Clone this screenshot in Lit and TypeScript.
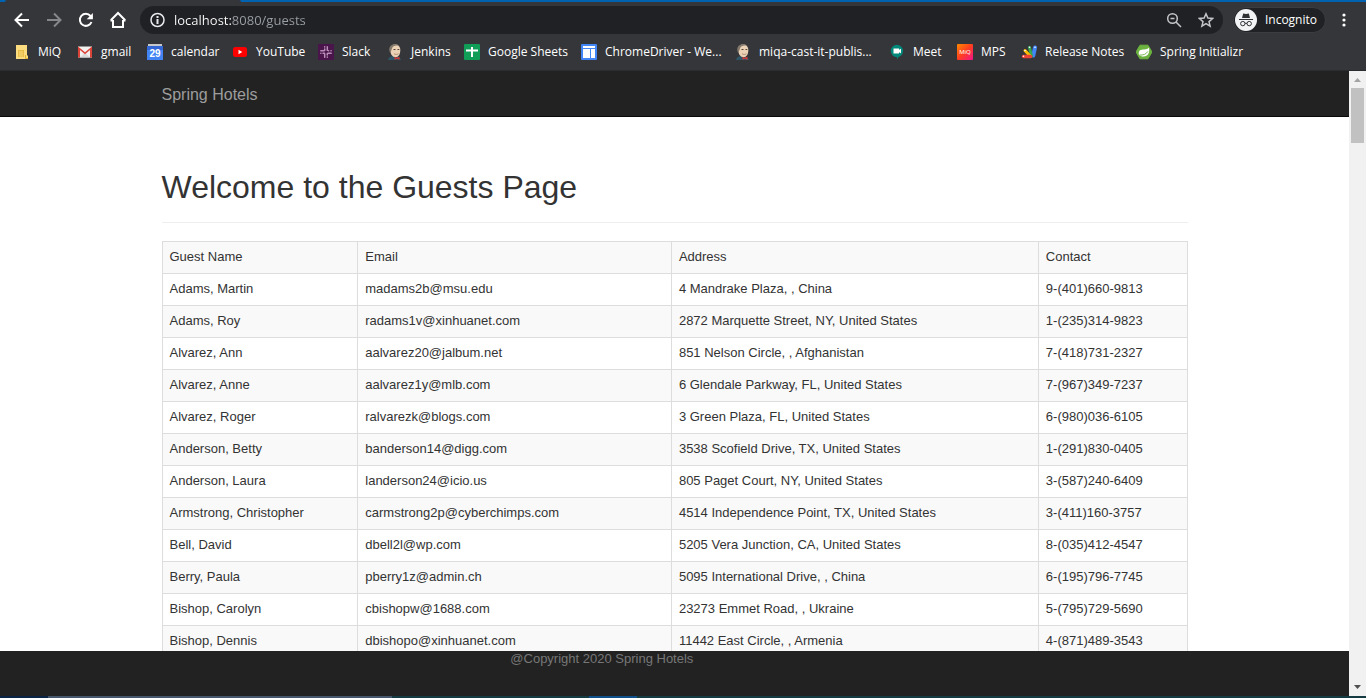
import { LitElement, html, css, svg } from "lit";
import { customElement } from "lit/decorators.js";

const jenkins = svg`
  <path d="M1 16c.3-2.500 2.500-4 6-4s6.500 1.500 7 4z" fill="#2f5566"/>
  <path d="M3 5.500C3 2.500 5 .5 8 .5s5.300 2 5.300 5.500c0 4.500-1.800 7.200-4.800 7.200S3.500 10.500 3 5.500z" fill="#ecd2b5"/>
  <path d="M3.300 9C1 5 2.500.6 8 .3 10 .2 11.500.8 12.300 2 9 1 6 1.500 5 4.500z" fill="#82776b"/>
  <path d="M6.500 5.500h2M10.500 5.500h1.800" stroke="#51413a" stroke-width="1" fill="none"/>
  <path d="M7 9.800c1.500.8 3 .8 4.500 0" stroke="#9c7f68" stroke-width=".8" fill="none"/>
  <path d="M7.500 12.800l2.200 1 2.800-1v3l-2.800-1-2.200 1z" fill="#d33833"/>`;

interface Bookmark {
  label: string;
  icon: unknown;
}

const bookmarks: Bookmark[] = [
  {
    label: "MiQ",
    icon: svg`<path d="M2 1h11v10.500h1V15H2z" fill="#fbdc7e"/><path d="M4 6h6v7H4z" fill="#e6b63c"/><path d="M4.500 8h5M4.500 10h5M4.500 12h5M6 6.500v6M8 6.500v6" stroke="#fbdc7e" stroke-width=".7"/><path d="M11.500 11v3.500H14" stroke="#e3af2c" fill="none"/>`,
  },
  {
    label: "gmail",
    icon: svg`<path d="M1 2.500h14v11H1z" fill="#f3f1f0"/><path d="M3 13.500l5-5 5 5z" fill="#dcdad9"/><path d="M1 13.500v-11L8 8.200l7-5.700v11h-2V6L8 10.200 3 6v7.500z" fill="#dc4437"/>`,
  },
  {
    label: "calendar",
    icon: svg`<path d="M1 0h14v3H1z" fill="#c6c8ca"/><path d="M0 2h16v14H0z" fill="#4284f3"/><path d="M0 2h16v4H0z" fill="#3367d6"/><text x="8" y="12.500" text-anchor="middle" font-family="Liberation Sans, sans-serif" font-size="10" font-weight="700" fill="#fff">29</text>`,
  },
  {
    label: "YouTube",
    icon: svg`<rect x="1" y="3" width="14" height="10" rx="2.500" fill="#f00"/><path d="M6.500 5.800v4.400L10.300 8z" fill="#fff"/>`,
  },
  {
    label: "Slack",
    icon: svg`<path d="M0 0h16v16H0z" fill="#4a154b"/><g stroke="#b88fb9" stroke-width="1.500" stroke-linecap="round"><path d="M6.700 2.800v.1M6.700 5v1.500M2.800 6.700h3M9.300 2.800v3.500M10.500 6.700h.1M13 6.700h.1M2.800 9.300h.1M5 9.300h1.500M6.700 10v3.200M9.300 9.500V11M9.300 13.100v.1M10 9.300h3.200"/></g>`,
  },
  { label: "Jenkins", icon: jenkins },
  {
    label: "Google Sheets",
    icon: svg`<rect width="16" height="16" rx="1" fill="#0f9d58"/><path d="M7 3h2v2.500h5v2H9V13H7V7.500H2v-2h5z" fill="#fff"/>`,
  },
  {
    label: "ChromeDriver - We...",
    icon: svg`<rect width="16" height="16" rx="1" fill="#4285f4"/><path d="M2 2h12v2H2zM2 5h7v9H2zM10 5h4v9h-4z" fill="#fff"/>`,
  },
  { label: "miqa-cast-it-publis...", icon: jenkins },
  {
    label: "Meet",
    icon: svg`<path d="M8 .8a6.200 6.200 0 0 1 1.500 12.200L8 15.500V13.200A6.200 6.200 0 0 1 8 .8z" fill="#00897b"/><path d="M4.500 4.500h5.500v1.300l2-1v4.400l-2-1v1.300H4.500z" fill="#fff"/>`,
  },
  {
    label: "MPS",
    icon: svg`<defs><linearGradient id="miq" x1="0" y1="0" x2="1" y2="1"><stop offset="0" stop-color="#ff8a00"/><stop offset=".5" stop-color="#ff3d1f"/><stop offset="1" stop-color="#f0148c"/></linearGradient></defs><rect width="16" height="16" rx="1" fill="url(#miq)"/><text x="8" y="10" text-anchor="middle" font-family="Open Sans, sans-serif" font-size="6" fill="#fff">MiQ</text>`,
  },
  {
    label: "Release Notes",
    icon: svg`<g fill="none" stroke-linecap="round" stroke-width="3"><path d="M14 3.500L12.300 11.500" stroke="#4285f4" stroke-width="4"/><path d="M8.500 3.500l2 8.500" stroke="#34a853"/><path d="M4 6.500l5.500 6" stroke="#fbbc04"/><path d="M2.500 12.500h7" stroke="#ea4335" stroke-width="3.500"/></g><g fill="#fff"><circle cx="14" cy="3.300" r=".8"/><circle cx="8.500" cy="3.300" r=".8"/><circle cx="4" cy="6.500" r=".8"/><circle cx="2.500" cy="12.200" r=".8"/></g>`,
  },
  {
    label: "Spring Initializr",
    icon: svg`<path d="M4 1.200h8L16 8l-4 6.800H4L0 8z" fill="#6db33f" stroke="#6db33f" stroke-linejoin="round"/><path d="M13 3.500c1 5-1 9-5.500 9-2 0-3.500-.7-4.500-1.800C2 6 5 5.500 8 5.500c2.500 0 4-.8 5-2z" fill="#fff"/><path d="M3.500 11c4 .3 6.500-.8 8.300-3.500" stroke="#6db33f" stroke-width=".9" fill="none"/>`,
  },
];

const columns = ["Guest Name", "Email", "Address", "Contact"];

const guests: string[][] = [
  ["Adams, Martin", "madams2b@msu.edu", "4 Mandrake Plaza, , China", "9-(401)660-9813"],
  ["Adams, Roy", "radams1v@xinhuanet.com", "2872 Marquette Street, NY, United States", "1-(235)314-9823"],
  ["Alvarez, Ann", "aalvarez20@jalbum.net", "851 Nelson Circle, , Afghanistan", "7-(418)731-2327"],
  ["Alvarez, Anne", "aalvarez1y@mlb.com", "6 Glendale Parkway, FL, United States", "7-(967)349-7237"],
  ["Alvarez, Roger", "ralvarezk@blogs.com", "3 Green Plaza, FL, United States", "6-(980)036-6105"],
  ["Anderson, Betty", "banderson14@digg.com", "3538 Scofield Drive, TX, United States", "1-(291)830-0405"],
  ["Anderson, Laura", "landerson24@icio.us", "805 Paget Court, NY, United States", "3-(587)240-6409"],
  ["Armstrong, Christopher", "carmstrong2p@cyberchimps.com", "4514 Independence Point, TX, United States", "3-(411)160-3757"],
  ["Bell, David", "dbell2l@wp.com", "5205 Vera Junction, CA, United States", "8-(035)412-4547"],
  ["Berry, Paula", "pberry1z@admin.ch", "5095 International Drive, , China", "6-(195)796-7745"],
  ["Bishop, Carolyn", "cbishopw@1688.com", "23273 Emmet Road, , Ukraine", "5-(795)729-5690"],
  ["Bishop, Dennis", "dbishopo@xinhuanet.com", "11442 East Circle, , Armenia", "4-(871)489-3543"],
];

@customElement("browser-chrome")
export class BrowserChrome extends LitElement {
  static styles = css`
    :host {
      display: block;
      background: #35363a;
      color: #fff;
      font: 12px/16px "Open Sans", "Noto Sans", sans-serif;
      border-bottom: 1px solid #2b2c2e;
    }
    .tabs {
      display: flex;
      height: 2px;
      background: #0063b1;
      padding-left: 5px;
    }
    .tab {
      width: 236px;
      background: #35363a;
      border-radius: 2px 2px 0 0;
    }
    .toolbar {
      display: flex;
      align-items: center;
      height: 36px;
      padding: 0 12px 0 10px;
    }
    button {
      display: flex;
      align-items: center;
      justify-content: center;
      border: 0;
      padding: 0;
      background: none;
      color: inherit;
      font: inherit;
    }
    svg {
      display: block;
      flex: none;
    }
    .nav {
      width: 24px;
      height: 24px;
      margin-right: 8px;
    }
    .disabled {
      color: #86878a;
    }
    .omnibox {
      flex: 1;
      display: flex;
      align-items: center;
      height: 28px;
      margin-left: 2px;
      padding: 0 8px 0 9px;
      border-radius: 14px;
      background: #202124;
    }
    .url {
      flex: 1;
      min-width: 0;
      height: 24px;
      margin-left: 8px;
      border: 0;
      padding: 0;
      outline: 0;
      font: 13px/24px "Open Sans", "Noto Sans", sans-serif;
      color: #fff;
      background: linear-gradient(90deg, #fff 58px, #9aa0a6 58px);
      background-clip: text;
      -webkit-background-clip: text;
      -webkit-text-fill-color: transparent;
    }
    .tool {
      width: 18px;
      height: 18px;
      margin-left: 14px;
      color: #c4c6c9;
    }
    .profile {
      gap: 8px;
      height: 26px;
      margin: 0 8px 0 10px;
      padding: 0 8px 0 1px;
      border: 1px solid #3c3d41;
      border-radius: 14px;
      background: #202124;
    }
    .bookmarks {
      display: grid;
      grid-template-columns: 63px 70px 85px 86px 69px 77px 117px 154px 154px 68px 64px 115px 1fr;
      align-items: center;
      height: 28px;
      padding: 0 0 4px 14px;
    }
    .bookmark {
      display: flex;
      gap: 8px;
      align-items: center;
      color: #fff;
      text-decoration: none;
      white-space: nowrap;
    }
  `;

  render() {
    return html`
      <div class="tabs"><div class="tab"></div></div>
      <div class="toolbar">
        <button class="nav" aria-label="Back">
          <svg width="16" height="16" fill="none" stroke="currentColor" stroke-width="2"><path d="M15 8H2M8 1.500L1.500 8 8 14.500"/></svg>
        </button>
        <button class="nav disabled" aria-label="Forward">
          <svg width="16" height="16" fill="none" stroke="currentColor" stroke-width="2"><path d="M1 8h13M8 1.500L14.500 8 8 14.500"/></svg>
        </button>
        <button class="nav" aria-label="Reload">
          <svg width="16" height="16" fill="none" stroke="currentColor" stroke-width="2"><path d="M13.500 10A6 6 0 1 1 12.500 4L14 5.500"/><path d="M14.900 1v6.200H8.700z" fill="currentColor" stroke="none"/></svg>
        </button>
        <button class="nav" aria-label="Home">
          <svg width="18" height="18" fill="none" stroke="currentColor" stroke-width="2"><path d="M4 9v7h10V9M1.500 9.500h2.500M16.500 9.500H14M1.800 9.300L9 2l7.200 7.300"/></svg>
        </button>
        <div class="omnibox">
          <svg width="17" height="16" fill="none" stroke="#e8eaed"><circle cx="8.500" cy="8" r="6.500" stroke-width="1.500"/><path d="M8.500 7v5M8.500 4v2" stroke-width="2"/></svg>
          <input class="url" aria-label="Address" value="localhost:8080/guests" spellcheck="false" />
          <button class="tool" aria-label="Zoom">
            <svg width="16" height="16" fill="none" stroke="currentColor" stroke-width="1.500"><circle cx="6.500" cy="6.500" r="4.800"/><path d="M10 10l5 5M4.500 6.500h4"/></svg>
          </button>
          <button class="tool" aria-label="Bookmark this page">
            <svg width="16" height="16" fill="none" stroke="currentColor" stroke-width="1.500"><path d="M8 1.800l1.900 4.300 4.700.4-3.600 3.100 1.100 4.600L8 11.700l-4.100 2.500L5 9.600 1.400 6.500l4.700-.4z"/></svg>
          </button>
        </div>
        <button class="profile">
          <svg width="22" height="22"><circle cx="11" cy="11" r="11" fill="#f1f3f4"/><path d="M7 9l1.200-4.500L11 5l2.800-.5L15 9z" fill="#303134"/><path d="M4 10.500h14" stroke="#303134" stroke-width="1"/><g fill="none" stroke="#303134"><circle cx="7.800" cy="14.600" r="2.200"/><circle cx="14.200" cy="14.600" r="2.200"/><path d="M10 14.300h2"/></g></svg>
          Incognito
        </button>
        <button class="menu" aria-label="Menu">
          <svg width="20" height="16" fill="currentColor"><circle cx="10" cy="3" r="1.600"/><circle cx="10" cy="8" r="1.600"/><circle cx="10" cy="13" r="1.600"/></svg>
        </button>
      </div>
      <nav class="bookmarks">
        ${bookmarks.map(
          (b) => html`<a class="bookmark" href="#"><svg width="16" height="16" viewBox="0 0 16 16">${b.icon}</svg>${b.label}</a>`
        )}
      </nav>
    `;
  }
}

@customElement("guests-page")
export class GuestsPage extends LitElement {
  static styles = css`
    :host {
      display: flex;
      flex-direction: column;
      min-width: 0;
      background: #fff;
      color: #333;
      font: 13px/17px "Liberation Sans", Arial, sans-serif;
    }
    .container {
      width: 90%;
      max-width: 1026px;
      margin: 0 auto;
    }
    .navbar {
      background: #222;
      border-bottom: 1px solid #080808;
    }
    .brand {
      display: inline-block;
      padding: 14px 0 11px;
      font-size: 16px;
      line-height: 20px;
      color: #9d9d9d;
      text-decoration: none;
      vertical-align: top;
    }
    .content {
      flex: 1;
      min-height: 0;
      overflow: hidden;
    }
    h1 {
      margin: 52px 0 18px;
      padding-bottom: 17px;
      border-bottom: 1px solid #eee;
      font-size: 32px;
      line-height: 36px;
      font-weight: 400;
    }
    table {
      width: 100%;
      table-layout: fixed;
      border-collapse: collapse;
    }
    .name { width: 19.1%; }
    .email { width: 30.6%; }
    .address { width: 35.8%; }
    th, td {
      padding: 6px 7px 8px;
      border: 1px solid #ddd;
      text-align: left;
      font-weight: 400;
    }
    .odd {
      background: #f9f9f9;
    }
    footer {
      height: 45px;
      background: #222;
      color: #777;
    }
    .copyright {
      margin: 0 0 0 34%;
      line-height: 15px;
    }
  `;

  render() {
    return html`
      <header class="navbar"><div class="container"><a class="brand" href="#">Spring Hotels</a></div></header>
      <main class="content">
        <div class="container">
          <h1>Welcome to the Guests Page</h1>
          <table>
            <colgroup><col class="name" /><col class="email" /><col class="address" /><col /></colgroup>
            <thead><tr class="odd">${columns.map((c) => html`<th scope="col">${c}</th>`)}</tr></thead>
            <tbody>
              ${guests.map((g, i) => html`<tr class=${i % 2 ? "odd" : "even"}>${g.map((v) => html`<td>${v}</td>`)}</tr>`)}
            </tbody>
          </table>
        </div>
      </main>
      <footer><div class="container"><p class="copyright">@Copyright 2020 Spring Hotels</p></div></footer>
    `;
  }
}

@customElement("app-root")
export class AppRoot extends LitElement {
  static styles = css`
    :host {
      display: flex;
      flex-direction: column;
      height: 100vh;
      overflow: hidden;
    }
    .viewport {
      flex: 1;
      min-height: 0;
      display: grid;
      grid-template-columns: 1fr 17px;
      grid-template-rows: minmax(0, 1fr);
    }
    .scrollbar {
      display: flex;
      flex-direction: column;
      align-items: center;
      background: #f1f1f1;
    }
    .arrow {
      display: block;
      width: 17px;
      height: 17px;
    }
    .track {
      flex: 1;
      width: 13px;
    }
    .thumb {
      height: 55px;
      background: #c1c1c1;
    }
    .taskbar {
      display: flex;
      height: 2px;
      background: #143a42;
    }
    .start { width: 48px; background: #0b2345; }
    .search { width: 344px; background: #46586b; }
    .space { width: 197px; }
    .active { width: 48px; background: #10508a; }
  `;

  render() {
    return html`
      <browser-chrome></browser-chrome>
      <div class="viewport">
        <guests-page></guests-page>
        <div class="scrollbar">
          <svg class="arrow" viewBox="0 0 17 17"><path d="M5 11l3.500-4L12 11z" fill="#a3a3a3"/></svg>
          <div class="track"><div class="thumb"></div></div>
          <svg class="arrow" viewBox="0 0 17 17"><path d="M5 6l3.500 4L12 6z" fill="#505050"/></svg>
        </div>
      </div>
      <div class="taskbar">
        <div class="start"></div><div class="search"></div><div class="space"></div><div class="active"></div>
      </div>
    `;
  }
}
